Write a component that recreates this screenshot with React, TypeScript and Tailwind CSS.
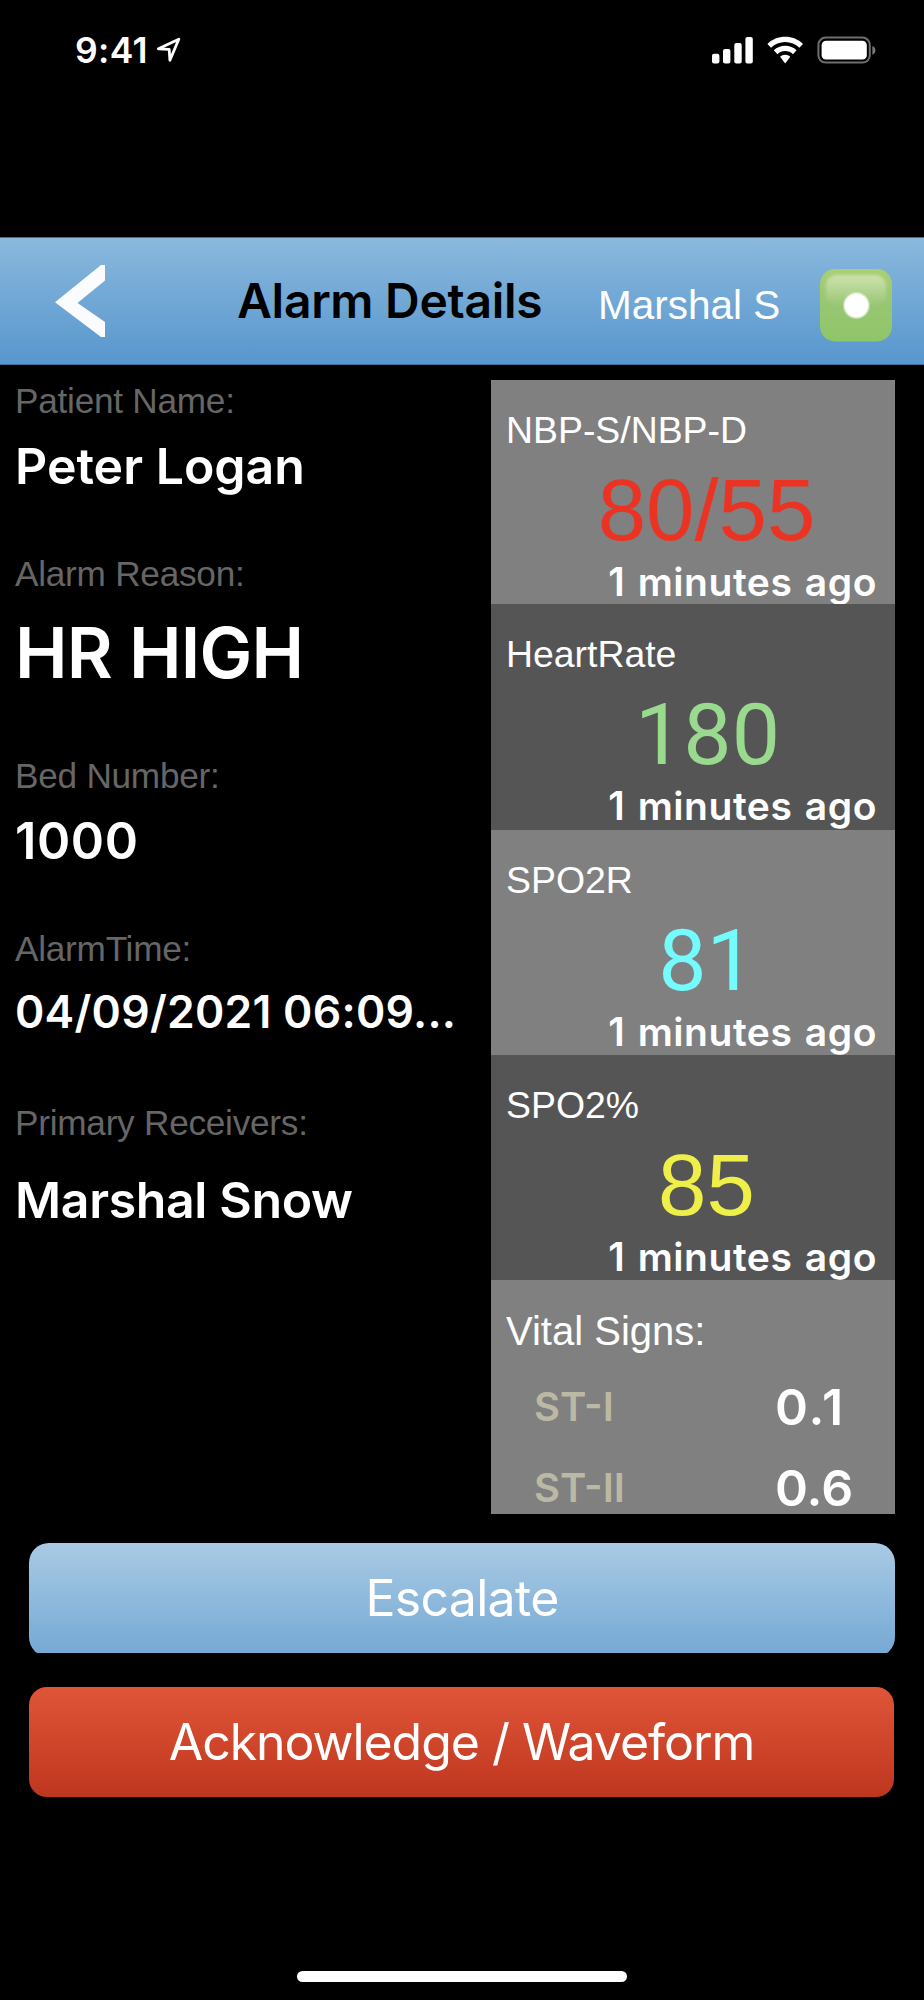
import React from 'react';

const inter = "font-['Inter',sans-serif]";
const helvetica = "font-['Liberation_Sans',sans-serif]";

const fields = [
  { label: 'Patient Name:', value: 'Peter Logan', row: 'h-[173px]', box: 'h-[86px] text-[50px]' },
  { label: 'Alarm Reason:', value: 'HR HIGH', row: 'h-[202px]', box: 'h-[114px] text-[70.5px] tracking-[-0.8px]' },
  { label: 'Bed Number:', value: '1000', row: 'h-[173px]', box: 'h-[86px] text-[50.5px] tracking-[0.6px]' },
  { label: 'AlarmTime:', value: '04/09/2021 06:09...', row: 'h-[174px]', box: 'h-[82px] text-[44.5px] tracking-[0.25px]' },
  { label: 'Primary Receivers:', value: 'Marshal Snow', row: 'h-[173px]', box: 'h-[109px] text-[50px] tracking-[-0.35px]' }
];

const vitals = [
  { name: 'NBP-S/NBP-D', value: '80/55', card: 'h-[224px] bg-[#808080]', text: "pt-px text-[#eb3323] font-['Liberation_Sans',sans-serif] text-[87px]" },
  { name: 'HeartRate', value: '180', card: 'h-[226px] bg-[#555555]', text: "pt-[2px] pl-[29px] text-[#99da8e] font-['Roboto',sans-serif] text-[86px]" },
  { name: 'SPO2R', value: '81', card: 'h-[225px] bg-[#808080]', text: "pt-[2px] text-[#73fbfd] font-['Roboto',sans-serif] text-[86px]" },
  { name: 'SPO2%', value: '85', card: 'h-[225px] bg-[#555555]', text: "pt-px text-[#efef4a] font-['Liberation_Sans',sans-serif] text-[87px]" }
];

const signs = [
  { name: 'ST-I', value: '0.1', tracking: 'tracking-[2px]' },
  { name: 'ST-II', value: '0.6', tracking: '' }
];

const StatusBar: React.FC = () => (
  <div className="flex h-[237px] items-start pt-[30px] pl-[75px] text-white">
    <span className={`${inter} w-[80px] text-[35.5px] leading-[41px] font-semibold tracking-[0.3px]`}>9:41</span>
    <svg className="mt-[7px] h-[26px] w-[27px]" viewBox="0 0 27 26" fill="none" stroke="white" strokeWidth="2.8" strokeLinejoin="round">
      <path d="M3.4 11.8 L23.8 2.2 L14.9 23.2 L14.2 12.4 Z" />
    </svg>
    <svg className="mt-[6px] ml-[530px] h-[28px] w-[41px]" viewBox="0 0 41 28" fill="white">
      <rect x="0" y="17.7" width="7.4" height="9.7" rx="2" />
      <rect x="11" y="13" width="7.4" height="14.4" rx="2" />
      <rect x="22.3" y="7" width="7.4" height="20.4" rx="2" />
      <rect x="33.4" y="1" width="7.4" height="26.4" rx="2" />
    </svg>
    <svg className="mt-[6px] ml-[14px] h-[28px] w-[37px]" viewBox="0 0 37 28" fill="white">
      <path d="M18.2 0.8 C25 0.8 31.3 3.4 36 7.9 L32.4 11.8 C28.6 8.2 23.6 6.1 18.2 6.1 C12.8 6.1 7.8 8.2 4 11.8 L0.4 7.9 C5.1 3.4 11.4 0.8 18.2 0.8 Z" />
      <path d="M18.2 9.8 C22.6 9.8 26.6 11.4 29.6 14.3 L26 18.2 C23.9 16.2 21.2 15.1 18.2 15.1 C15.2 15.1 12.5 16.2 10.4 18.2 L6.8 14.3 C9.8 11.4 13.8 9.8 18.2 9.8 Z" />
      <path d="M18.2 18.7 C20.2 18.7 22 19.5 23.3 20.8 L18.2 27.4 L13.1 20.8 C14.4 19.5 16.2 18.7 18.2 18.7 Z" />
    </svg>
    <svg className="mt-[6px] ml-[13px] h-[28px] w-[60px]" viewBox="0 0 60 28">
      <rect x="1.4" y="1.6" width="51.4" height="25" rx="7.4" fill="none" stroke="#6e6e6e" strokeWidth="2" />
      <rect x="4.6" y="4.8" width="45.2" height="18.8" rx="4.4" fill="white" />
      <path d="M55.4 10 C59.4 11.6 59.4 17.2 55.4 18.8 Z" fill="#7a7a7a" />
    </svg>
  </div>
);

const Header: React.FC = () => (
  <header className="flex h-[128px] items-start border-y border-[#3f6f99] bg-linear-to-b from-[#8ab9dd] to-[#5796cd]">
    <svg className="mt-[27px] ml-[55px] h-[73px] w-[50px]" viewBox="0 0 50 73" fill="#fbfcfe">
      <path d="M0 37.2 L46 0 H50 V15.5 L22.5 38 L50 57 V72 H46 Z" />
    </svg>
    <h1 className={`${inter} mt-[33px] ml-[132px] w-[361px] text-[48px] leading-[60px] font-semibold tracking-[-0.3px] whitespace-nowrap text-black`}>
      Alarm Details
    </h1>
    <span className={`${helvetica} mt-[40px] w-[222px] text-[40.5px] leading-[54px] whitespace-nowrap text-white`}>
      Marshal S
    </span>
    <svg className="mt-[31px] h-[73px] w-[72px]" viewBox="0 0 72 73">
      <defs>
        <linearGradient id="badge" x1="0" y1="0" x2="0" y2="1">
          <stop offset="0" stopColor="#abcf74" />
          <stop offset="0.45" stopColor="#98c673" />
          <stop offset="1" stopColor="#8fc569" />
        </linearGradient>
        <linearGradient id="gloss" x1="0" y1="0" x2="0" y2="1">
          <stop offset="0" stopColor="white" stopOpacity="0.42" />
          <stop offset="1" stopColor="white" stopOpacity="0" />
        </linearGradient>
        <radialGradient id="dot">
          <stop offset="0.8" stopColor="white" />
          <stop offset="1" stopColor="white" stopOpacity="0" />
        </radialGradient>
        <filter id="soft">
          <feGaussianBlur stdDeviation="1.6" />
        </filter>
      </defs>
      <rect width="72" height="72.5" rx="15" fill="url(#badge)" />
      <rect x="6" y="6" width="60" height="31" rx="10" fill="url(#gloss)" filter="url(#soft)" />
      <circle cx="36.4" cy="36.5" r="14" fill="url(#dot)" />
    </svg>
  </header>
);

export default function App() {
  return (
    <div className="flex h-[2000px] w-[924px] flex-col overflow-hidden bg-black">
      <StatusBar />
      <Header />

      <main className="flex h-[1149px] items-start">
        <div className="w-[491px] pt-[14px] pl-[15px]">
          {fields.map((f) => (
            <div key={f.label} className={f.row}>
              <div className={`${helvetica} text-[35.2px] leading-[44px] tracking-[-0.25px] text-[#666666]`}>{f.label}</div>
              <div className={`${inter} flex items-center leading-none font-semibold whitespace-nowrap text-white ${f.box}`}>
                {f.value}
              </div>
            </div>
          ))}
        </div>

        <div className="mt-[15px] flex h-[1134px] w-[404px] flex-col">
          {vitals.map((v) => (
            <div key={v.name} className={`shrink-0 pt-[28px] ${v.card}`}>
              <div className={`${helvetica} pl-[15px] text-[37.4px] leading-[44px] text-white`}>{v.name}</div>
              <div className={`mt-[13px] h-[88px] pl-[27px] text-center leading-[88px] ${v.text}`}>{v.value}</div>
              <div className={`${inter} mt-[7px] pr-[18px] text-right text-[39px] leading-[44px] font-semibold tracking-[0.55px] [word-spacing:2px] whitespace-nowrap text-white`}>
                1 minutes ago
              </div>
            </div>
          ))}
          <div className="h-[234px] shrink-0 bg-[#808080] pt-[28px]">
            <div className={`${helvetica} h-[45px] overflow-hidden pl-[15px] text-[40px] leading-[46px] text-white`}>
              Vital Signs:
            </div>
            <div className="flex flex-col gap-[31px] pt-[29px]">
              {signs.map((s) => (
                <div key={s.name} className={`${inter} flex h-[50px] items-center pl-[43px] leading-none font-semibold`}>
                  <span className="w-[241px] text-[40px] text-[#bbb9a3]">{s.name}</span>
                  <span className={`text-[50px] text-white ${s.tracking}`}>{s.value}</span>
                </div>
              ))}
            </div>
          </div>
        </div>
      </main>

      <div className={`${inter} flex flex-col gap-[34px] px-[29px] pt-[29px] text-[50px] text-white`}>
        <div className="h-[110px] overflow-hidden">
          <button className="block h-[114px] w-[866px] rounded-[20px] bg-linear-to-b from-[#a9cae4] to-[#73a8d4] pb-[4px] tracking-[-0.7px]">
            Escalate
          </button>
        </div>
        <button className="h-[110px] w-[865px] rounded-[18px] bg-linear-to-b from-[#e05538] to-[#be361e] tracking-[-1.05px]">
          Acknowledge / Waveform
        </button>
      </div>

      <div className="mx-auto mt-[174px] h-[11px] w-[330px] shrink-0 rounded-full bg-white" />
    </div>
  );
}
